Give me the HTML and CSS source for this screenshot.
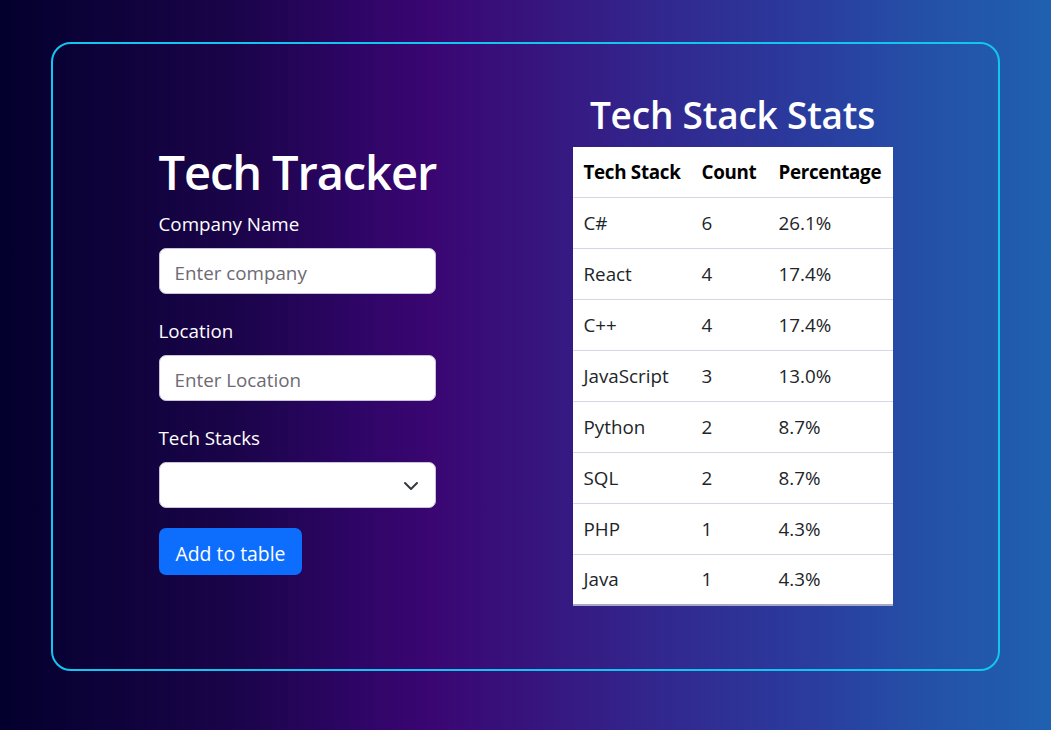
FILE: index.html
```html
<!DOCTYPE html>
<html lang="en">
<head>
<meta charset="utf-8">
<title>Tech Tracker</title>
<link rel="stylesheet" href="styles.css">
</head>
<body>
<main class="card">
  <section class="form-col">
    <h1 class="title">Tech Tracker</h1>
    <div class="field">
      <label class="label" for="company">Company Name</label>
      <input class="input" id="company" type="text" placeholder="Enter company">
    </div>
    <div class="field">
      <label class="label" for="location">Location</label>
      <input class="input" id="location" type="text" placeholder="Enter Location">
    </div>
    <div class="field">
      <label class="label" for="stacks">Tech Stacks</label>
      <div class="select-wrap">
        <select class="input select" id="stacks"><option></option></select>
        <svg class="chevron" viewBox="0 0 16 16" width="16" height="16" aria-hidden="true"><path d="M2 5l6 6 6-6" fill="none" stroke="#343a40" stroke-width="2" stroke-linecap="round" stroke-linejoin="round"/></svg>
      </div>
    </div>
    <button class="btn" type="button">Add to table</button>
  </section>
  <section class="stats-col">
    <h2 class="subtitle">Tech Stack Stats</h2>
    <table class="stats">
      <thead>
        <tr><th class="c1">Tech Stack</th><th class="c2">Count</th><th class="c3">Percentage</th></tr>
      </thead>
      <tbody>
        <tr><td>C#</td><td>6</td><td>26.1%</td></tr>
        <tr><td>React</td><td>4</td><td>17.4%</td></tr>
        <tr><td>C++</td><td>4</td><td>17.4%</td></tr>
        <tr><td>JavaScript</td><td>3</td><td>13.0%</td></tr>
        <tr><td>Python</td><td>2</td><td>8.7%</td></tr>
        <tr><td>SQL</td><td>2</td><td>8.7%</td></tr>
        <tr><td>PHP</td><td>1</td><td>4.3%</td></tr>
        <tr><td>Java</td><td>1</td><td>4.3%</td></tr>
      </tbody>
    </table>
  </section>
</main>
</body>
</html>
```

FILE: styles.css
```css
* { box-sizing: border-box; }

html, body { margin: 0; height: 100%; }

body {
  width: 1051px;
  height: 730px;
  padding: 42px 51px 59px 51px;
  font-family: "Open Sans", "Noto Sans", sans-serif;
  font-size: 18.8px;
  color: #212529;
  background: linear-gradient(90deg, #03002d 0%, #1a0449 22%, #2e0566 34%, #3a0672 41%, #37137c 50%, #32268d 62%, #2b3a9d 76%, #2450a8 88%, #1f60b1 100%);
  overflow: hidden;
}

.card {
  height: 629px;
  border: 2px solid #12c6f0;
  border-radius: 20px;
  display: flex;
  justify-content: center;
  align-items: flex-start;
  gap: 137px;
  padding-top: 48px;
}

.form-col {
  width: 277px;
  margin-top: 51px;
  display: flex;
  flex-direction: column;
}

.title {
  margin: 0 0 9px;
  font-size: 47px;
  line-height: 58px;
  font-weight: 600;
  color: #ffffff;
  white-space: nowrap;
  letter-spacing: -1.1px;
}

.field {
  display: flex;
  flex-direction: column;
  margin-bottom: 23px;
}

.label {
  color: #ffffff;
  line-height: 29px;
  margin-bottom: 9px;
}

.input {
  width: 277px;
  height: 46px;
  border: 1px solid #c8c3d8;
  border-radius: 7px;
  background: #ffffff;
  padding: 3px 15px 0;
  font-family: inherit;
  font-size: 18.8px;
  color: #212529;
}

.input::placeholder { color: #6d6a73; }

.select-wrap { position: relative; }

.select {
  appearance: none;
  -webkit-appearance: none;
}

.chevron {
  position: absolute;
  right: 17px;
  top: 16px;
  width: 16px;
  height: 16px;
  pointer-events: none;
}

.btn {
  align-self: flex-start;
  margin-top: -3px;
  height: 47px;
  padding: 3px 17px 0;
  border: none;
  border-radius: 7px;
  background: #0d6efd;
  color: #ffffff;
  font-family: inherit;
  font-size: 19.4px;
}

.stats-col {
  width: 320px;
  display: flex;
  flex-direction: column;
  align-items: center;
}

.subtitle {
  margin: 0 0 9px;
  font-size: 37px;
  line-height: 46px;
  font-weight: 600;
  color: #ffffff;
  white-space: nowrap;
  letter-spacing: -0.2px;
}

.stats {
  width: 320px;
  table-layout: fixed;
  border-collapse: collapse;
  background: #ffffff;
  font-size: 18.8px;
}

.stats th, .stats td {
  text-align: left;
  padding: 0 0 0 11px;
  border-bottom: 1px solid #d7d6e4;
  white-space: nowrap;
  overflow: visible;
}

.stats th {
  height: 50px;
  font-weight: 700;
  color: #000000;
  letter-spacing: -0.3px;
}

.stats td {
  height: 51px;
  color: #212529;
}

.stats .c1 { width: 118px; }
.stats .c2 { width: 77px; }
.stats .c3 { width: 125px; }

.stats tbody tr:last-child td { border-bottom: 2px solid #a9a8c4; }
```
